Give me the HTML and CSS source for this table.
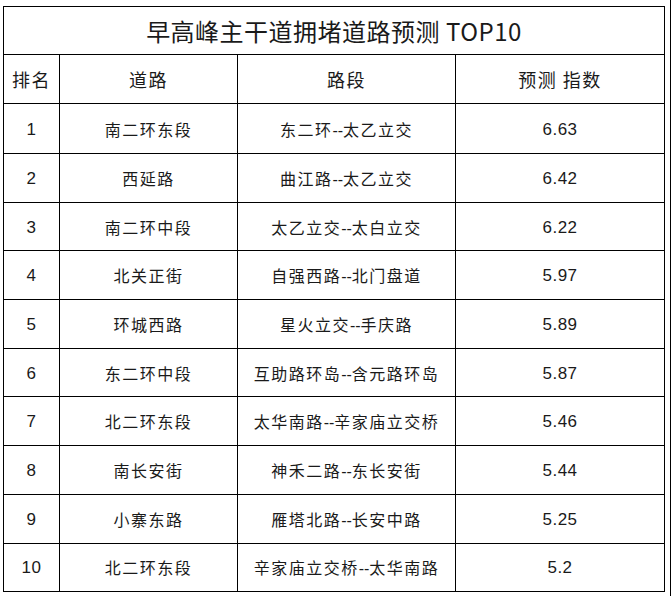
FILE: index.html
```html
<!DOCTYPE html>
<html lang="zh">
<head>
<meta charset="utf-8">
<link rel="stylesheet" href="styles.css">
</head>
<body>
<div class="page">
<table class="rank">
  <colgroup>
    <col class="c1"><col class="c2"><col class="c3"><col class="c4">
  </colgroup>
  <thead>
    <tr class="title-row"><th colspan="4">早高峰主干道拥堵道路预测 TOP10</th></tr>
    <tr class="head-row"><th>排名</th><th>道路</th><th>路段</th><th>预测 指数</th></tr>
  </thead>
  <tbody>
    <tr class="first"><td class="num">1</td><td>南二环东段</td><td>东二环<span class="dash">--</span>太乙立交</td><td class="num">6.63</td></tr>
    <tr><td class="num">2</td><td>西延路</td><td>曲江路<span class="dash">--</span>太乙立交</td><td class="num">6.42</td></tr>
    <tr><td class="num">3</td><td>南二环中段</td><td>太乙立交<span class="dash">--</span>太白立交</td><td class="num">6.22</td></tr>
    <tr><td class="num">4</td><td>北关正街</td><td>自强西路<span class="dash">--</span>北门盘道</td><td class="num">5.97</td></tr>
    <tr><td class="num">5</td><td>环城西路</td><td>星火立交<span class="dash">--</span>手庆路</td><td class="num">5.89</td></tr>
    <tr><td class="num">6</td><td>东二环中段</td><td>互助路环岛<span class="dash">--</span>含元路环岛</td><td class="num">5.87</td></tr>
    <tr><td class="num">7</td><td>北二环东段</td><td>太华南路<span class="dash">--</span>辛家庙立交桥</td><td class="num">5.46</td></tr>
    <tr><td class="num">8</td><td>南长安街</td><td>神禾二路<span class="dash">--</span>东长安街</td><td class="num">5.44</td></tr>
    <tr><td class="num">9</td><td>小寨东路</td><td>雁塔北路<span class="dash">--</span>长安中路</td><td class="num">5.25</td></tr>
    <tr><td class="num">10</td><td>北二环东段</td><td>辛家庙立交桥<span class="dash">--</span>太华南路</td><td class="num">5.2</td></tr>
  </tbody>
</table>
</div>
</body>
</html>
```
FILE: styles.css
```css
html, body {
  margin: 0;
  padding: 0;
  background: #fff;
}
.page {
  width: 671px;
  height: 596px;
  border-right: 1px solid #000;
  padding: 6px 0 0 3px;
  box-sizing: border-box;
}
.rank {
  border-collapse: collapse;
  table-layout: fixed;
  width: 661px;
  font-family: "Noto Sans CJK SC", "Liberation Sans", sans-serif;
  color: #1a1a1a;
}
.c1 { width: 56px; }
.c2 { width: 178px; }
.c3 { width: 218px; }
.c4 { width: 209px; }
.rank th, .rank td {
  border: 1px solid #000;
  text-align: center;
  vertical-align: middle;
  padding: 0;
}
.title-row th {
  height: 47px;
  font-size: 24px;
  font-weight: 400;
  letter-spacing: 0.5px;
}
.head-row th {
  height: 48px;
  font-size: 18px;
  font-weight: 400;
  letter-spacing: 1.5px;
}
.rank td {
  height: 47.7px;
  font-size: 16px;
  letter-spacing: 1.5px;
}
.rank tr.first td { height: 49px; }
.rank td.num {
  font-family: "Liberation Sans", sans-serif;
  font-size: 17px;
  letter-spacing: 0.5px;
  padding-top: 2px;
  height: 45.7px;
}
.rank tr.first td.num { height: 47px; }
.dash {
  font-family: "Liberation Sans", sans-serif;
  letter-spacing: 0;
}
```
